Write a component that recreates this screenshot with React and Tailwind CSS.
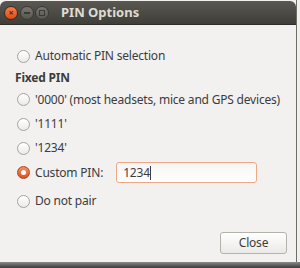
import React from "react";

function Radio({ checked }) {
  if (checked) {
    return (
      <span className="w-[13px] h-[13px] rounded-full border border-[#a8461c] bg-gradient-to-b from-[#f39163] to-[#d9521c] flex items-center justify-center shrink-0">
        <span className="w-[5px] h-[5px] rounded-full bg-white" />
      </span>
    );
  }
  return (
    <span className="w-[13px] h-[13px] rounded-full border border-[#a7a49f] bg-gradient-to-b from-white to-[#eceae7] shrink-0" />
  );
}

function Row({ label, checked, h = "h-[24px]" }) {
  return (
    <div className={`flex items-center ${h} pl-[17px] whitespace-nowrap`}>
      <Radio checked={checked} />
      <span className="ml-[5px]">{label}</span>
    </div>
  );
}

export default function App() {
  return (
    <div
      className="w-[300px] h-[268px] bg-[#ececec] flex flex-col overflow-hidden text-[#3c3c3c]"
      style={{ fontFamily: '"Noto Sans", "Open Sans", sans-serif' }}
    >
      <div className="flex h-[262px]">
        <div className="w-[297px] flex flex-col bg-[#f2f1f0] border-r border-[#6e6d68]">
          <div className="h-[24px] mt-[1px] rounded-t-[6px] bg-gradient-to-b from-[#5a5851] to-[#3f3e39] flex items-center pl-[4px] border-b border-[#2f2e2b]">
            <span className="w-[14px] h-[14px] rounded-full bg-gradient-to-b from-[#f77e4a] to-[#de4a15] border border-[#3a2a22] flex items-center justify-center text-[9px] leading-none font-bold text-[#5a2a16]">
              ×
            </span>
            <span className="ml-[2px] w-[14px] h-[14px] rounded-full bg-gradient-to-b from-[#7a7872] to-[#57554f] border border-[#3a3934] flex items-center justify-center">
              <span className="w-[6px] h-[2px] bg-[#3a3934]" />
            </span>
            <span className="ml-[1px] w-[14px] h-[14px] rounded-full bg-gradient-to-b from-[#7a7872] to-[#57554f] border border-[#3a3934] flex items-center justify-center">
              <span className="w-[6px] h-[6px] border border-[#3a3934]" />
            </span>
            <span className="ml-[12px] text-[13px] font-bold text-[#dfdbd2]">PIN Options</span>
          </div>
          <div className="flex-1 flex flex-col pt-[19px] text-[12px] tracking-[-0.2px]">
            <Row label="Automatic PIN selection" />
            <div className="h-[19px] flex items-center pl-[15px] font-bold">Fixed PIN</div>
            <Row label="'0000' (most headsets, mice and GPS devices)" h="h-[25px]" />
            <Row label="'1111'" />
            <Row label="'1234'" />
            <div className="flex items-center h-[25px] pl-[17px] whitespace-nowrap">
              <Radio checked />
              <span className="ml-[5px]">Custom PIN:</span>
              <div className="ml-[13px] w-[141px] h-[21px] rounded-[3px] border border-[#eea888] bg-gradient-to-b from-[#f6f5f4] to-white flex items-center pl-[6px]">
                <span>1234</span>
                <span className="w-px h-[14px] bg-[#3c3c3c]" />
              </div>
            </div>
            <div className="mt-[4px]">
              <Row label="Do not pair" />
            </div>
            <div className="flex-1" />
            <div className="flex justify-end pr-[9px] pb-[8px]">
              <div className="w-[67px] h-[22px] rounded-[3px] border border-[#b5b1ab] bg-gradient-to-b from-white to-[#ebe9e6] flex items-center justify-center">
                Close
              </div>
            </div>
          </div>
        </div>
        <div className="flex-1 bg-[#efefef]" />
      </div>
      <div className="flex-1 bg-gradient-to-b from-[#8a8a8a] to-[#3c3c3c]" />
    </div>
  );
}
